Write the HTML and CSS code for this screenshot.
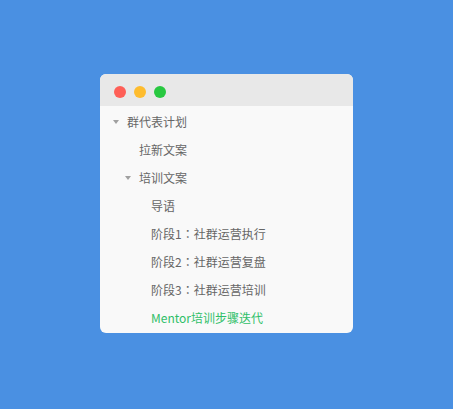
FILE: index.html
```html
<!DOCTYPE html>
<html lang="zh">
<head>
<meta charset="utf-8">
<link rel="stylesheet" href="styles.css">
</head>
<body>
<div class="window">
  <div class="titlebar">
    <span class="dot red"></span>
    <span class="dot yellow"></span>
    <span class="dot green"></span>
  </div>
  <ul class="tree">
    <li class="row l0"><span class="arrow"></span><span class="label">群代表计划</span></li>
    <li class="row l1"><span class="spacer"></span><span class="label">拉新文案</span></li>
    <li class="row l1"><span class="arrow"></span><span class="label">培训文案</span></li>
    <li class="row l2"><span class="spacer"></span><span class="label">导语</span></li>
    <li class="row l2"><span class="spacer"></span><span class="label">阶段1<span class="colon" lang="zh-TW">：</span>社群运营执行</span></li>
    <li class="row l2"><span class="spacer"></span><span class="label">阶段2<span class="colon" lang="zh-TW">：</span>社群运营复盘</span></li>
    <li class="row l2"><span class="spacer"></span><span class="label">阶段3<span class="colon" lang="zh-TW">：</span>社群运营培训</span></li>
    <li class="row l2 active"><span class="spacer"></span><span class="label">Mentor培训步骤迭代</span></li>
  </ul>
</div>
</body>
</html>
```
FILE: styles.css
```css
html, body {
  margin: 0;
  padding: 0;
}
body {
  background: #4a90e2;
  width: 453px;
  height: 409px;
  padding-top: 74px;
  box-sizing: border-box;
  font-family: "Noto Sans CJK SC", "Noto Sans", sans-serif;
}
.window {
  width: 253px;
  height: 259px;
  margin: 0 auto;
  background: #f9f9f9;
  border-radius: 6px;
  overflow: hidden;
}
.titlebar {
  height: 32px;
  box-sizing: border-box;
  background: #e8e8e8;
  padding: 12px 0 0 14px;
  display: flex;
  gap: 8px;
}
.dot {
  width: 12px;
  height: 12px;
  border-radius: 50%;
  display: block;
}
.red { background: #fe5f57; }
.yellow { background: #febc2e; }
.green { background: #28c840; }
.tree {
  list-style: none;
  margin: 0;
  padding: 2px 0 0 0;
}
.row {
  height: 28px;
  display: flex;
  align-items: center;
  font-size: 12px;
  color: #666;
}
.l0 { padding-left: 12px; }
.l1 { padding-left: 24px; }
.l2 { padding-left: 36px; }
.arrow, .spacer {
  width: 15px;
  flex: none;
  display: flex;
  align-items: center;
}
.arrow::before {
  content: "";
  display: block;
  margin-left: 1px;
  width: 0;
  height: 0;
  border-left: 3px solid transparent;
  border-right: 3px solid transparent;
  border-top: 4px solid #a0a0a0;
}
.label {
  line-height: 28px;
  white-space: nowrap;
}
.colon {
  font-family: "Noto Sans CJK TC", "Noto Sans CJK SC", sans-serif;
}
.active { color: #2fbf68; }
```
